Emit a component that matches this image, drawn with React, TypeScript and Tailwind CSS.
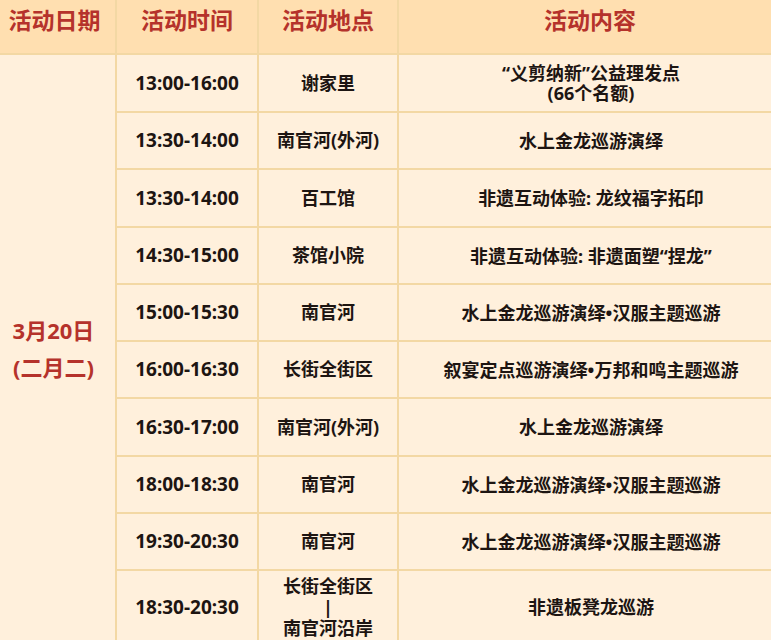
const rows: { time: string; place: string[]; content: string[]; h: string }[] = [
  { time: "13:00-16:00", place: ["谢家里"], content: ["“义剪纳新”公益理发点", "(66个名额)"], h: "h-[58px]" },
  { time: "13:30-14:00", place: ["南官河(外河)"], content: ["水上金龙巡游演绎"], h: "h-[57px]" },
  { time: "13:30-14:00", place: ["百工馆"], content: ["非遗互动体验: 龙纹福字拓印"], h: "h-[58px]" },
  { time: "14:30-15:00", place: ["茶馆小院"], content: ["非遗互动体验: 非遗面塑“捏龙”"], h: "h-[57px]" },
  { time: "15:00-15:30", place: ["南官河"], content: ["水上金龙巡游演绎•汉服主题巡游"], h: "h-[57px]" },
  { time: "16:00-16:30", place: ["长街全街区"], content: ["叙宴定点巡游演绎•万邦和鸣主题巡游"], h: "h-[57px]" },
  { time: "16:30-17:00", place: ["南官河(外河)"], content: ["水上金龙巡游演绎"], h: "h-[58px]" },
  { time: "18:00-18:30", place: ["南官河"], content: ["水上金龙巡游演绎•汉服主题巡游"], h: "h-[57px]" },
  { time: "19:30-20:30", place: ["南官河"], content: ["水上金龙巡游演绎•汉服主题巡游"], h: "h-[57px]" },
  { time: "18:30-20:30", place: ["长街全街区", "|", "南官河沿岸"], content: ["非遗板凳龙巡游"], h: "h-[74px]" },
];

const cell = "border-2 border-[#f3d8a4] text-center align-middle";

export default function App() {
  return (
    <div className="w-[771px] h-[640px] overflow-hidden bg-[#fff0dc] font-['Noto_Sans','Noto_Sans_CJK_SC',sans-serif]">
      <table className="w-[775px] -ml-[2px] -mt-[2px] table-fixed border-collapse">
        <colgroup>
          <col className="w-[117px]" />
          <col className="w-[142px]" />
          <col className="w-[140px]" />
          <col />
        </colgroup>
        <thead>
          <tr className="h-[55px] bg-[#ffdfb0] text-[23px] font-bold text-[#b5322b]">
            <th className={`${cell} pb-[12px] pr-[6px]`}>活动日期</th>
            <th className={`${cell} pb-[12px]`}>活动时间</th>
            <th className={`${cell} pb-[12px]`}>活动地点</th>
            <th className={`${cell} pb-[12px] pl-[10px]`}>活动内容</th>
          </tr>
        </thead>
        <tbody className="text-[18px] font-bold text-[#1d1512]">
          {rows.map((r, i) => (
            <tr key={i} className={r.h}>
              {i === 0 && (
                <td rowSpan={rows.length} className={`${cell} pr-[8px] text-[22px] leading-[37px] text-[#b5322b]`}>
                  <div>3月20日</div>
                  <div>(二月二)</div>
                </td>
              )}
              <td className={`${cell} text-[19px]`}>{r.time}</td>
              <td className={`${cell} leading-[21px]`}>
                {r.place.map((p, j) => (
                  <div key={j}>{p}</div>
                ))}
              </td>
              <td className={`${cell} pl-[12px] leading-[20px]`}>
                {r.content.map((c, j) => (
                  <div key={j}>{c}</div>
                ))}
              </td>
            </tr>
          ))}
        </tbody>
      </table>
    </div>
  );
}
